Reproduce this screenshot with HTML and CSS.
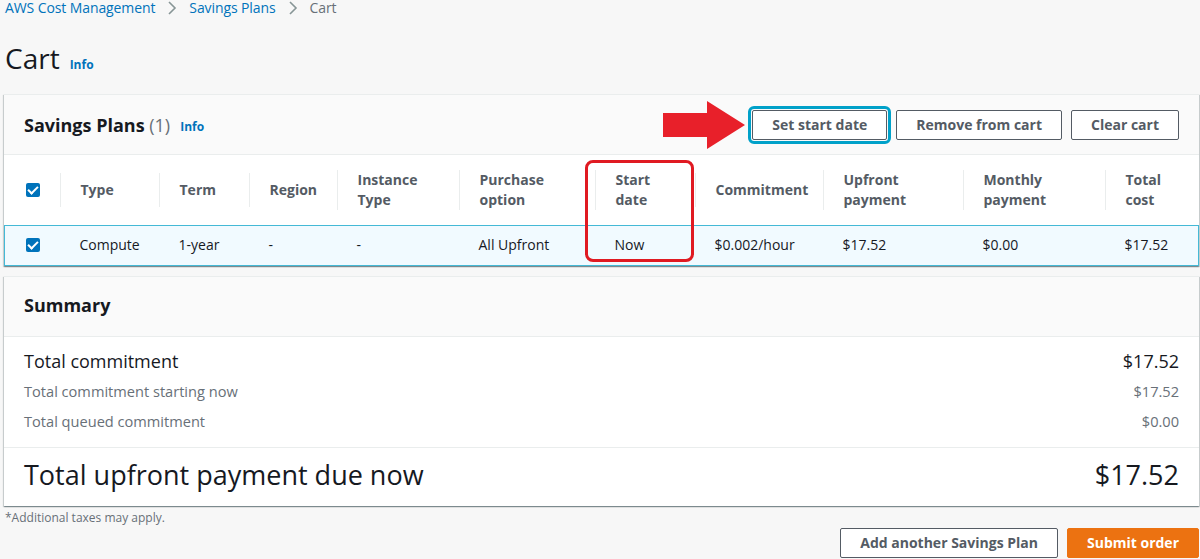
FILE: index.html
```html
<!DOCTYPE html>
<html lang="en">

<head>
  <meta charset='utf-8'>
  <title>Cart</title>
  <link rel="stylesheet" href="styles.css">
</head>

<body>
  <div class='page'>
    <div class='crumbs'>
      <a class='crumb'>AWS Cost Management</a>
      <svg class='chev' width='10' height='14' viewBox='0 0 10 14'><path d='M2 1l6 6-6 6' fill='none' stroke='#879596' stroke-width='1.6'/></svg>
      <a class='crumb'>Savings Plans</a>
      <svg class='chev' width='10' height='14' viewBox='0 0 10 14'><path d='M2 1l6 6-6 6' fill='none' stroke='#879596' stroke-width='1.6'/></svg>
      <span class='crumb-now'>Cart</span>
    </div>

    <div class='title'>
      <h1>Cart</h1>
      <a class='info'>Info</a>
    </div>

    <div class='card plans'>
      <div class='card-head'>
        <h2>Savings Plans <span class='count'>(1)</span></h2>
        <a class='info'>Info</a>
        <div class='actions'>
          <button class='btn focus'>Set start date</button>
          <button class='btn'>Remove from cart</button>
          <button class='btn'>Clear cart</button>
        </div>
        <!-- annotation arrow -->
        <svg class='arrow' width='84' height='48' viewBox='0 0 84 48'>
          <polygon points='0,12 44,12 44,0 82,24 44,48 44,36 0,36' fill='#e8202a'/>
        </svg>
      </div>
      <table class='grid'>
        <colgroup>
          <col style='width:55px'><col style='width:99px'><col style='width:90px'><col style='width:88px'>
          <col style='width:122px'><col style='width:136px'><col style='width:100px'><col style='width:128px'>
          <col style='width:140px'><col style='width:142px'><col>
        </colgroup>
        <thead>
          <tr>
            <th class='sel'><span class='cb'></span></th>
            <th><div>Type</div></th>
            <th><div>Term</div></th>
            <th><div>Region</div></th>
            <th><div>Instance<br>Type</div></th>
            <th><div>Purchase<br>option</div></th>
            <th><div>Start<br>date</div></th>
            <th><div>Commitment</div></th>
            <th><div>Upfront<br>payment</div></th>
            <th><div>Monthly<br>payment</div></th>
            <th><div>Total<br>cost</div></th>
          </tr>
        </thead>
        <tbody>
          <tr class='picked'>
            <td class='sel'><span class='cb'></span></td>
            <td>Compute</td>
            <td>1-year</td>
            <td>-</td>
            <td>-</td>
            <td>All Upfront</td>
            <td>Now</td>
            <td>$0.002/hour</td>
            <td>$17.52</td>
            <td>$0.00</td>
            <td>$17.52</td>
          </tr>
        </tbody>
      </table>
      <div class='mark'></div>
    </div>

    <div class='card summary'>
      <div class='card-head'>
        <h2>Summary</h2>
      </div>
      <div class='sum-body'>
        <div class='line big'><span>Total commitment</span><span>$17.52</span></div>
        <div class='line sub'><span>Total commitment starting now</span><span>$17.52</span></div>
        <div class='line sub'><span>Total queued commitment</span><span>$0.00</span></div>
      </div>
      <div class='due'><span>Total upfront payment due now</span><span>$17.52</span></div>
    </div>

    <div class='foot'>
      <p class='note'>*Additional taxes may apply.</p>
      <div class='foot-btns'>
        <button class='btn'>Add another Savings Plan</button>
        <button class='btn primary'>Submit order</button>
      </div>
    </div>
  </div>
</body>

</html>
```

FILE: styles.css
```css
* {
  margin: 0;
  padding: 0;
  box-sizing: border-box;
}

body {
  background: #f7f7f7;
  font-family: "Open Sans", "Noto Sans", sans-serif;
  font-size: 14px;
  color: #16191f;
}

.page {
  padding: 0 1px 0 4px;
}

a {
  cursor: pointer;
}

.crumbs {
  display: flex;
  align-items: center;
  gap: 12px;
  height: 18px;
  margin-top: -1px;
  padding-left: 1px;
  line-height: 18px;
  letter-spacing: -0.1px;
}

.crumb {
  color: #0073bb;
}

.crumb-now {
  color: #687078;
}

.title {
  display: flex;
  align-items: baseline;
  gap: 10px;
  margin-top: 23px;
  padding-left: 1px;
  height: 54px;
}

h1 {
  font-size: 28px;
  font-weight: 400;
  line-height: 36px;
}

.info {
  color: #0073bb;
  font-size: 12px;
  font-weight: 700;
}

.card {
  background: #fff;
  border-top: 1px solid #eaeded;
  box-shadow: 0 1px 1px 0 rgba(0, 28, 36, .3), 1px 1px 1px 0 rgba(0, 28, 36, .15), -1px 1px 1px 0 rgba(0, 28, 36, .15);
  position: relative;
}

.card-head {
  display: flex;
  align-items: center;
  gap: 10px;
  background: #fafafa;
  border-bottom: 1px solid #eaeded;
  padding: 0 20px;
  height: 60px;
  position: relative;
}

h2 {
  font-size: 18px;
  font-weight: 700;
  line-height: 24px;
}

.summary h2 {
  margin-top: -3px;
}

.plans .info {
  margin-top: 3px;
}

.count {
  font-weight: 400;
  color: #687078;
}

.actions {
  margin-left: auto;
  display: flex;
  gap: 9px;
}

.btn {
  font-family: inherit;
  font-size: 14px;
  font-weight: 700;
  color: #545b64;
  background: #fff;
  border: 1px solid #545b64;
  border-radius: 2px;
  height: 30px;
  padding: 0 19px;
  cursor: pointer;
}

.btn.focus {
  outline: 3px solid #00a1c9;
  outline-offset: 1px;
}

.btn.primary {
  background: #ec7211;
  border-color: #ec7211;
  color: #fff;
}

.arrow {
  position: absolute;
  left: 659px;
  top: 6px;
}

.grid {
  width: 100%;
  border-collapse: collapse;
  table-layout: fixed;
}

.grid th {
  height: 70px;
  text-align: left;
  font-weight: 700;
  color: #545b64;
  line-height: 20px;
  vertical-align: middle;
}

.grid th div {
  border-left: 1px solid #eaeded;
  padding: 0 0 0 20px;
  min-height: 34px;
  display: flex;
  align-items: center;
}

.grid td {
  height: 40px;
  padding-left: 20px;
  background: #f1faff;
  border-top: 1px solid #44b9d6;
  border-bottom: 1px solid #44b9d6;
  line-height: 20px;
}

.grid td:first-child {
  border-left: 1px solid #44b9d6;
}

.grid td:last-child {
  border-right: 1px solid #44b9d6;
}

.grid .sel {
  padding-left: 21px;
  vertical-align: middle;
}

.cb {
  display: block;
  width: 14px;
  height: 14px;
  border-radius: 2px;
  background: #0073bb;
  position: relative;
}

.cb::after {
  content: "";
  position: absolute;
  left: 4px;
  top: 1px;
  width: 4px;
  height: 8px;
  border: solid #fff;
  border-width: 0 2px 2px 0;
  transform: rotate(45deg);
}

/* red annotation box round start date column */
.mark {
  position: absolute;
  left: 581px;
  top: 65px;
  width: 109px;
  height: 102px;
  border: 3px solid #e01a22;
  border-radius: 8px;
}

.summary {
  margin-top: 10px;
}

.sum-body {
  padding: 11px 20px 11px;
  border-bottom: 1px solid #eaeded;
}

.line {
  display: flex;
  justify-content: space-between;
}

.line.big {
  font-size: 18px;
  line-height: 26px;
  margin-bottom: 2px;
}

.line.sub {
  color: #687078;
  font-size: 14.6px;
  line-height: 30px;
}

.due {
  display: flex;
  justify-content: space-between;
  align-items: center;
  height: 58px;
  padding: 0 20px 4px;
  font-size: 27px;
}

.foot {
  display: flex;
  justify-content: space-between;
  align-items: flex-start;
  padding-top: 4px;
}

.note {
  font-size: 12px;
  color: #687078;
  line-height: 16px;
  padding-left: 1px;
}

.foot-btns {
  display: flex;
  gap: 9px;
  margin-top: 18px;
}
```
